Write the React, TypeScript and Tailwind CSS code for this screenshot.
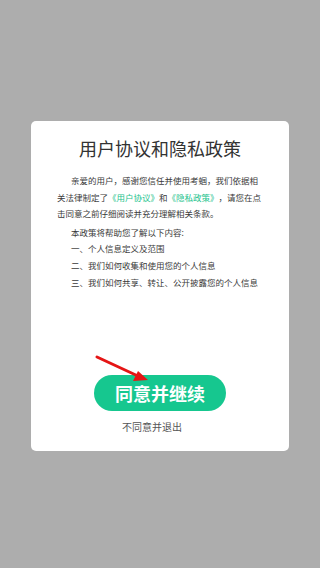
import React from "react";

export default function App() {
  const font = { fontFamily: '"Noto Sans CJK SC", "Noto Sans", sans-serif' };
  return (
    <div
      className="w-[320px] h-[568px] bg-[#adadad] flex justify-center items-start pt-[121px] overflow-hidden"
      style={font}
    >
      <div className="relative w-[258px] h-[330px] bg-white rounded-[5px] px-[26px] pt-[136px] box-border flex flex-col">
        <div className="absolute left-0 right-0 top-[15px] text-center text-[18px] leading-[24px] text-[#333333]">
          用户协议和隐私政策
        </div>
        <div className="absolute left-[26px] right-[26px] top-[51px] text-[8.5px] text-[#3a3a3a] whitespace-nowrap">
          <div className="mb-[2px]">
            <div className="leading-[16.6px] pl-[14px]">亲爱的用户，感谢您信任并使用考蝈，我们依据相</div>
            <div className="leading-[16.6px] flex">
              <span>关法律制定了</span>
              <span className="text-[#1cc38d]">《用户协议》</span>
              <span>和</span>
              <span className="text-[#1cc38d]">《隐私政策》</span>
              <span>，请您在点</span>
            </div>
            <div className="leading-[16.6px]">击同意之前仔细阅读并充分理解相关条款。</div>
          </div>
          <div className="leading-[16.6px] pl-[14px]">本政策将帮助您了解以下内容:</div>
          <div className="leading-[16.6px] pl-[14px]">一、个人信息定义及范围</div>
          <div className="leading-[16.6px] pl-[14px]">二、我们如何收集和使用您的个人信息</div>
          <div className="leading-[16.6px] pl-[14px]">三、我们如何共享、转让、公开披露您的个人信息</div>
        </div>
        <div className="flex-1" />
        <div className="flex justify-center mt-[118px]">
          <button className="w-[132px] h-[36px] rounded-full bg-[#16c78f] text-white text-[18px] font-bold leading-[36px] text-center">
            同意并继续
          </button>
        </div>
        <div className="flex justify-center mt-[9px] mb-[17px] pr-[16px]">
          <span className="text-[10px] leading-[14px] text-[#555555]">不同意并退出</span>
        </div>
        <svg
          className="absolute left-[60px] top-[230px] pointer-events-none"
          width="64"
          height="36"
          viewBox="0 0 64 36"
        >
          <line x1="6" y1="6" x2="48" y2="25.5" stroke="#e51515" strokeWidth="3" strokeLinecap="round" />
          <polygon points="57,29 42,30 47,20" fill="#e51515" />
        </svg>
      </div>
    </div>
  );
}
